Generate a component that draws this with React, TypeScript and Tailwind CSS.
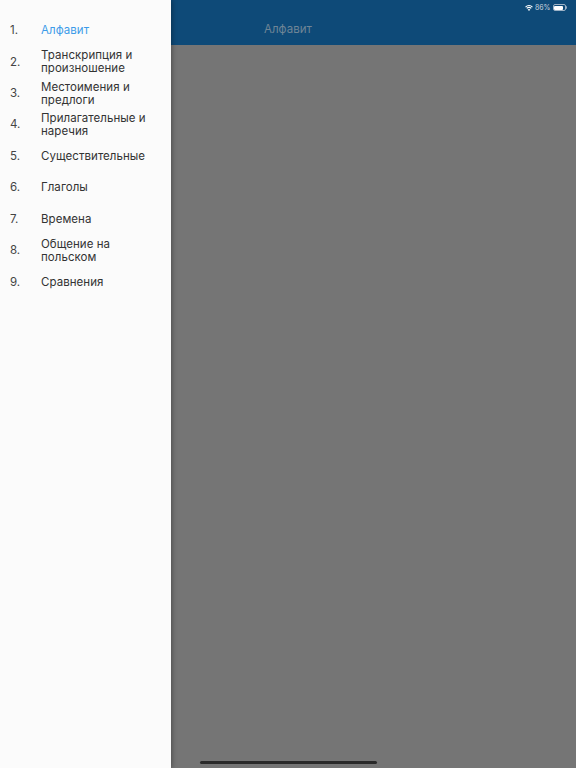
const items = [
  'Алфавит',
  'Транскрипция и произношение',
  'Местоимения и предлоги',
  'Прилагательные и наречия',
  'Существительные',
  'Глаголы',
  'Времена',
  'Общение на польском',
  'Сравнения',
];

function WifiIcon() {
  return (
    <svg className="w-[8px] h-[6px]" viewBox="0 0 18 14" fill="#ffffff">
      <path d="M9 14 L6 10.6 A4.6 4.6 0 0 1 12 10.6 Z" />
      <path d="M4.6 9 L2.8 7 A9 9 0 0 1 15.2 7 L13.4 9 A6.4 6.4 0 0 0 4.6 9 Z" />
      <path d="M1.8 5.9 L0 3.9 A13 13 0 0 1 18 3.9 L16.2 5.9 A10.4 10.4 0 0 0 1.8 5.9 Z" />
    </svg>
  );
}

function BatteryIcon() {
  return (
    <div className="flex items-center">
      <div className="w-[13px] h-[7px] rounded-[2px] border-[0.5px] border-[#9db2c6] p-[0.5px] flex">
        <div className="w-[86%] bg-white rounded-[1px]" />
      </div>
      <div className="w-[1px] h-[3px] ml-[0.5px] bg-[#8fa8bf] rounded-r-sm" />
    </div>
  );
}

export default function App() {
  return (
    <div className="relative w-[576px] h-[768px] overflow-hidden bg-[#757575] font-['Inter',sans-serif]">
      {/* App bar */}
      <header className="h-[45px] bg-[#0e4a78] flex flex-col">
        <div className="h-[14px] flex items-center justify-end gap-[2px] pr-[9px] pt-[1px]">
          <WifiIcon />
          <span className="text-[7px] leading-none text-[#c8d4df]">86%</span>
          <BatteryIcon />
        </div>
        <h1 className="text-center text-[11.5px] leading-[31px] tracking-[0.05px] font-normal text-[#6f8596]">
          Алфавит
        </h1>
      </header>

      {/* Drawer */}
      <nav className="absolute left-0 top-0 bottom-0 w-[171px] bg-[#fbfbfb] pt-[15px] shadow-[1px_0_5px_rgba(0,0,0,0.35)]">
        {items.map((item, i) => (
          <div key={item} className="h-[31.45px] flex items-center pl-[10px]">
            <span className="w-[31px] shrink-0 text-[11.5px] text-[#444444]">{i + 1}.</span>
            <span
              className={`text-[11.5px] leading-[13px] tracking-[0.05px] pr-[20px] ${
                i === 0 ? 'text-[#3d9be9]' : 'text-[#333333]'
              }`}
            >
              {item}
            </span>
          </div>
        ))}
      </nav>

      {/* Home indicator */}
      <div className="absolute left-[200px] bottom-[4px] w-[177px] h-[3px] rounded-full bg-[#2a2a2a]" />
    </div>
  );
}
